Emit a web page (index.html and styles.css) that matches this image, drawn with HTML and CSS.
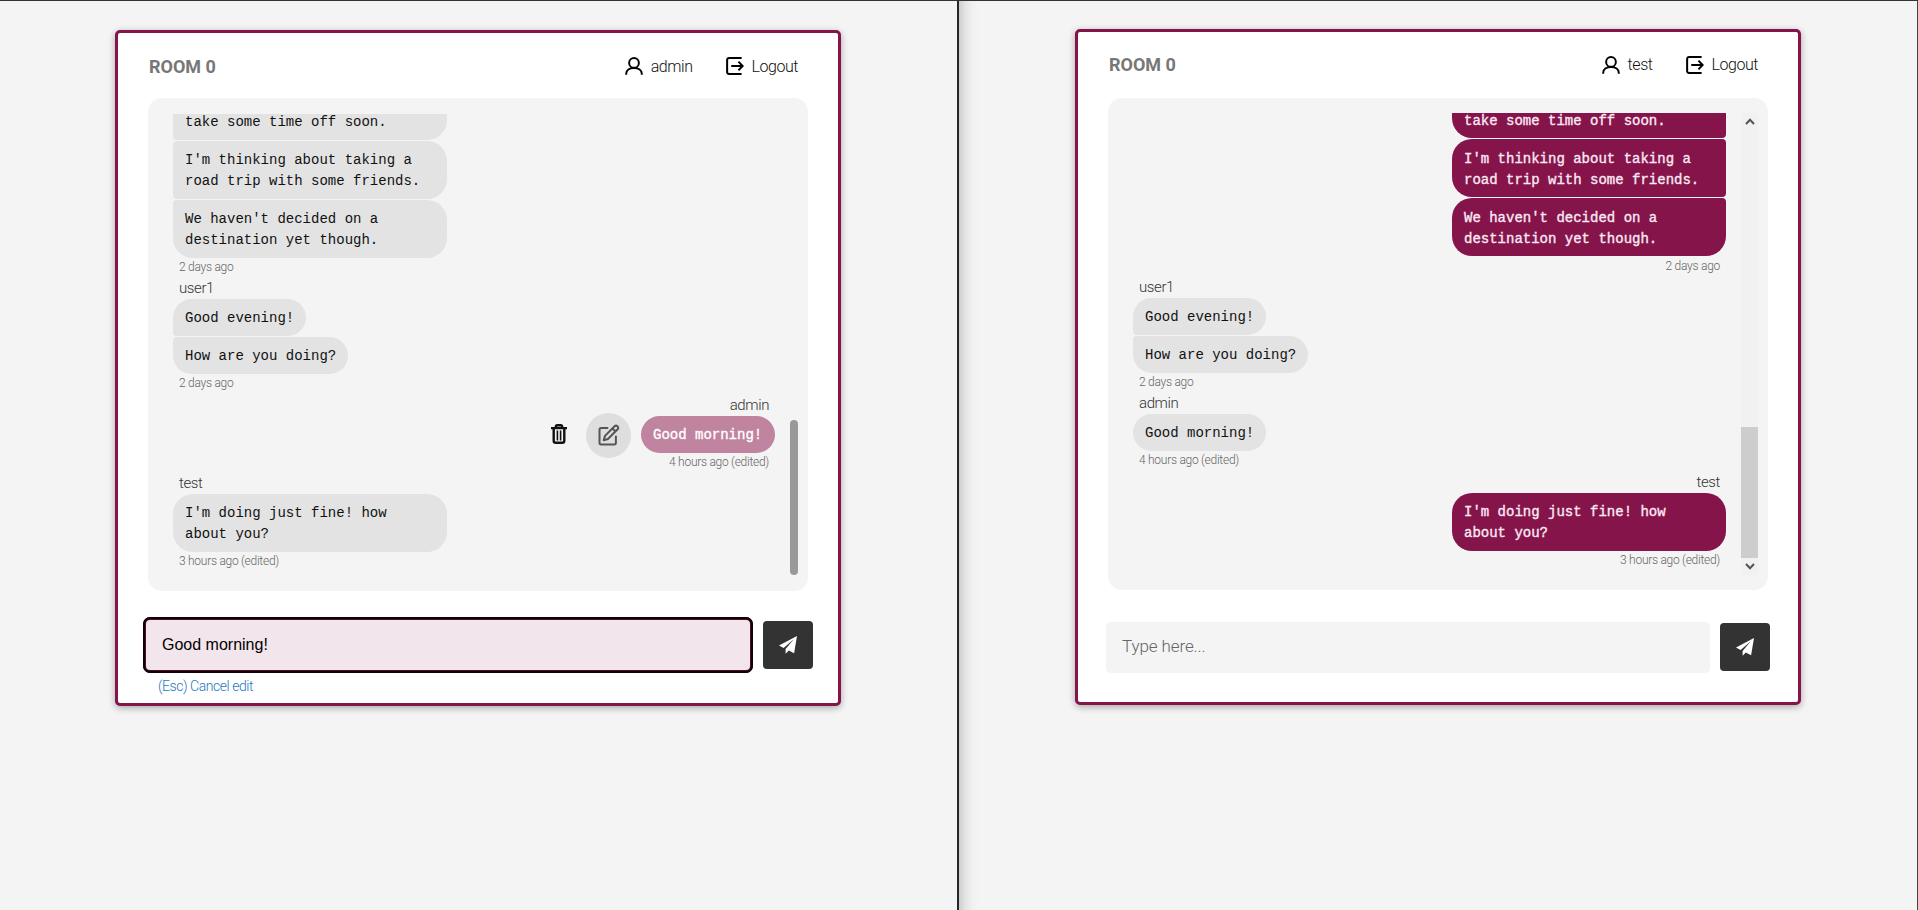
FILE: index.html
```html
<!DOCTYPE html>
<html lang="en">
<head>
<meta charset="utf-8">
<title>Room 0</title>
<link rel="stylesheet" href="styles.css">
</head>
<body>
<svg class="sprite" aria-hidden="true">
  <symbol id="i-user" viewBox="0 0 24 24"><path fill="none" stroke="currentColor" stroke-width="2.6" d="M1.6 23.5v-1.2C1.6 17.6 6 14.6 12 14.6s10.4 3 10.4 7.7v1.2M12 14.4a6.5 6.5 0 1 0 0-13 6.5 6.5 0 0 0 0 13z"/></symbol>
  <symbol id="i-logout" viewBox="0 0 24 24"><path fill="none" stroke="currentColor" stroke-width="2.7" d="M20.8 1.4H4.2A2.6 2.6 0 0 0 1.5 4v16a2.6 2.6 0 0 0 2.7 2.6h16.6M7 12h15M16.6 6.2 22.2 12l-5.6 5.8"/></symbol>
  <symbol id="i-trash" viewBox="0 0 16 20"><path fill="none" stroke="currentColor" stroke-width="2.4" d="M0 4.1h16M4.8 4V2.9Q4.8 1.2 6.3 1.2h3.4q1.5 0 1.5 1.7V4M2.7 4.5v12.2q0 2 2 2h6.600q2 0 2-2V4.5"/><path fill="none" stroke="currentColor" stroke-width="1.600" d="M6.4 6.500v10M9.600 6.500v10"/></symbol>
  <symbol id="i-edit" viewBox="0 0 22 22"><path fill="none" stroke="currentColor" stroke-width="2" stroke-linejoin="round" stroke-linecap="round" d="M9.5 4H3.2Q1.5 4 1.5 5.7v13q0 1.7 1.700 1.700h13q1.700 0 1.700-1.700V12.600M7 11.900 16.600 2.200q1.500-1.200 2.900.2 1.400 1.500.1 2.900L9.900 15l-4.200 1.200zM14.500 4.500l2.800 2.800"/></symbol>
  <symbol id="i-send" viewBox="0 0 18 18"><path fill="currentColor" d="M18 0 0 9.600l4.600 2.300L14.800 3.300 6.600 13v4.800l3.200-3.400 5.300 2.800z"/></symbol>
</svg>
<main class="screens">
  <section class="pane pane-left">
    <div class="card">
      <header class="head">
        <h1 class="title">ROOM 0</h1>
        <nav class="nav">
          <a class="link"><svg class="icon"><use href="#i-user"/></svg><span>admin</span></a>
          <a class="link"><svg class="icon"><use href="#i-logout"/></svg><span>Logout</span></a>
        </nav>
      </header>
      <div class="chat">
        <div class="messages">
          <div class="group">
            <p class="bubble cut tail-bottom">take some time off soon.</p>
            <p class="bubble tail-top tail-bottom">I'm thinking about taking a road trip with some friends.</p>
            <p class="bubble tail-top">We haven't decided on a destination yet though.</p>
            <span class="time">2 days ago</span>
          </div>
          <div class="group">
            <span class="name">user1</span>
            <p class="bubble tail-bottom">Good evening!</p>
            <p class="bubble tail-top">How are you doing?</p>
            <span class="time">2 days ago</span>
          </div>
          <div class="group mine">
            <span class="name">admin</span>
            <div class="row">
              <svg class="trash"><use href="#i-trash"/></svg>
              <button class="edit"><svg class="edit-icon"><use href="#i-edit"/></svg></button>
              <p class="bubble editing">Good morning!</p>
            </div>
            <span class="time">4 hours ago (edited)</span>
          </div>
          <div class="group">
            <span class="name">test</span>
            <p class="bubble">I'm doing just fine! how about you?</p>
            <span class="time">3 hours ago (edited)</span>
          </div>
        </div>
        <div class="bar-slim"><div class="thumb-slim"></div></div>
      </div>
      <div class="composer">
        <input class="field active" value="Good morning!">
        <button class="send"><svg class="send-icon"><use href="#i-send"/></svg></button>
      </div>
      <a class="cancel">(Esc) Cancel edit</a>
    </div>
  </section>
  <section class="pane pane-right">
    <div class="card">
      <header class="head">
        <h1 class="title">ROOM 0</h1>
        <nav class="nav">
          <a class="link"><svg class="icon"><use href="#i-user"/></svg><span>test</span></a>
          <a class="link"><svg class="icon"><use href="#i-logout"/></svg><span>Logout</span></a>
        </nav>
      </header>
      <div class="chat">
        <div class="messages">
          <div class="group mine stack">
            <p class="bubble cut tail-bottom">take some time off soon.</p>
            <p class="bubble tail-top tail-bottom">I'm thinking about taking a road trip with some friends.</p>
            <p class="bubble tail-top">We haven't decided on a destination yet though.</p>
            <span class="time">2 days ago</span>
          </div>
          <div class="group">
            <span class="name">user1</span>
            <p class="bubble tail-bottom">Good evening!</p>
            <p class="bubble tail-top">How are you doing?</p>
            <span class="time">2 days ago</span>
          </div>
          <div class="group">
            <span class="name">admin</span>
            <p class="bubble">Good morning!</p>
            <span class="time">4 hours ago (edited)</span>
          </div>
          <div class="group mine">
            <span class="name">test</span>
            <p class="bubble">I'm doing just fine! how about you?</p>
            <span class="time">3 hours ago (edited)</span>
          </div>
        </div>
        <div class="bar-wide">
          <svg class="arrow" viewBox="0 0 10 7"><path d="M1 6l4-4.300L9 6"/></svg>
          <div class="thumb-wide"></div>
          <svg class="arrow" viewBox="0 0 10 7"><path d="M1 1l4 4.300L9 1"/></svg>
        </div>
      </div>
      <div class="composer">
        <input class="field" placeholder="Type here...">
        <button class="send"><svg class="send-icon"><use href="#i-send"/></svg></button>
      </div>
    </div>
  </section>
</main>
</body>
</html>
```
FILE: styles.css
```css
* { box-sizing: border-box; }

body {
  margin: 0;
  background: #f4f4f4;
  font-family: Roboto, "Noto Sans", sans-serif;
  font-weight: 300;
}

h1, p { margin: 0; }

.sprite { display: none; }

.screens {
  display: flex;
  width: 1918px;
  height: 910px;
  overflow: hidden;
  border-top: 1px solid #333;
}

.pane {
  display: flex;
  justify-content: center;
  align-items: flex-start;
}

.pane-left {
  width: 959px;
  padding-top: 29px;
  border-right: 2px solid #24262a;
}

.pane-right {
  width: 959px;
  padding-top: 28px;
  border-right: 1px solid #444;
  background: linear-gradient(to right, #cdcdcd, #e3e3e3 6px, #f0f0f0 13px, #f4f4f4 20px);
}

.card {
  width: 726px;
  height: 676px;
  border: 3px solid #85144b;
  border-radius: 5px;
  background: #fff;
  box-shadow: 0 2px 7px rgba(0, 0, 0, 0.32);
}

.pane-left .card { margin-left: -1px; }

.head {
  display: flex;
  justify-content: space-between;
  align-items: center;
  height: 65px;
  padding: 1px 40px 0 31px;
}

.pane-right .head { height: 66px; padding-bottom: 2px; }

.title {
  color: #777;
  font-size: 18px;
  font-weight: 700;
}

.nav { display: flex; gap: 33px; }

.link {
  display: flex;
  align-items: center;
  gap: 8px;
  color: #111;
  font-size: 16px;
  letter-spacing: -0.45px;
}

.icon { width: 18px; height: 18px; color: #000; }

.chat {
  display: flex;
  justify-content: space-between;
  width: 660px;
  height: 493px;
  margin-left: 30px;
  padding: 16px 10px 15px 25px;
  border-radius: 14px;
  background: #f4f4f4;
}

.pane-right .chat { height: 492px; padding-top: 15px; }

.messages {
  display: flex;
  flex-direction: column;
  justify-content: flex-end;
  width: 602px;
  overflow: hidden;
  padding-bottom: 5.700px;
}

.pane-right .messages { width: 593px; padding-bottom: 6px; }

.group {
  display: flex;
  flex-direction: column;
  align-items: flex-start;
  flex: none;
}

.mine { align-items: flex-end; }

.name {
  height: 23px;
  padding: 0 6px;
  color: #333;
  font-size: 15px;
  line-height: 24px;
  letter-spacing: -0.4px;
}

.time {
  height: 18.300px;
  padding: 0 6px;
  color: #666;
  font-size: 12px;
  line-height: 18px;
  letter-spacing: -0.27px;
}

.bubble {
  max-width: 274px;
  padding: 9px 12px 7px;
  border-radius: 20px;
  background: #e3e3e3;
  color: #111;
  font-family: "Liberation Mono", monospace;
  font-size: 14px;
  font-weight: 400;
  line-height: 21px;
}

.bubble + .bubble { margin-top: 1px; }

.cut { width: 274px; padding-top: 30px; }

.tail-top { border-top-left-radius: 4px; }
.tail-bottom { border-bottom-left-radius: 4px; }

.mine .bubble {
  background: #85144b;
  color: #fbe9f3;
  -webkit-text-stroke: 0.35px currentColor;
}
.mine .tail-top { border-top-left-radius: 20px; border-top-right-radius: 4px; }
.mine .tail-bottom { border-bottom-left-radius: 20px; border-bottom-right-radius: 4px; }
.mine .editing { background: #c083a0; color: #fff; }

.stack .bubble { padding-top: 10px; padding-bottom: 6px; }
.stack .cut { padding-top: 31px; }
.stack .time { margin-top: 1px; }

.row {
  display: flex;
  align-items: center;
  height: 37px;
}

.trash { width: 16px; height: 20px; margin: 0 19px 0 0; color: #111; }

.edit {
  display: flex;
  align-items: center;
  justify-content: center;
  width: 45px;
  height: 45px;
  margin: 2px 10px 0 0;
  padding: 0;
  border: 0;
  border-radius: 50%;
  background: #dedede;
  color: #555;
}

.edit-icon { width: 22px; height: 22px; }

.editing { width: 134px; }

.bar-slim {
  display: flex;
  align-items: flex-end;
  width: 8px;
  padding-bottom: 1px;
}

.thumb-slim {
  width: 8px;
  height: 155px;
  border-radius: 4px;
  background: #999;
}

.bar-wide {
  display: flex;
  flex-direction: column;
  align-items: center;
  justify-content: space-between;
  width: 17px;
  padding: 5px 0;
  background: #f1f1f1;
}

.thumb-wide {
  width: 17px;
  height: 131px;
  margin: auto 0 5px;
  background: #cdcdcd;
}

.arrow {
  width: 10px;
  height: 7px;
  fill: none;
  stroke: #555;
  stroke-width: 2;
}

.composer {
  display: flex;
  align-items: center;
  justify-content: space-between;
  height: 56px;
  margin: 26px 25px 0;
}

.pane-right .composer { margin: 29px 28px 0; }

.field {
  width: 604px;
  height: 51px;
  padding: 0 16px;
  border: 0;
  border-radius: 5px;
  background: #f4f4f4;
  color: #000;
  font: 400 16px "Liberation Sans", Arial, sans-serif;
}

.field::placeholder {
  color: #666;
  font: 300 17px Roboto, sans-serif;
  letter-spacing: -0.1px;
}

.field.active {
  width: 610px;
  height: 56px;
  padding: 0 18px 1px 18px;
  border: 1px solid #85144b;
  outline: 2px solid #120008;
  outline-offset: -2px;
  box-shadow: inset 0 0 0 2px #4a1029;
  border-radius: 7px;
  background: #f3e5ec;
}

.send {
  display: flex;
  align-items: center;
  justify-content: center;
  width: 50px;
  height: 48px;
  padding: 0;
  border: 0;
  border-radius: 4px;
  background: #333;
  color: #fff;
}

.send-icon { width: 18px; height: 18px; }

.cancel {
  display: block;
  margin: 5px 0 0 40px;
  color: #1f78c1;
  font-size: 14px;
  line-height: 17px;
  letter-spacing: -0.45px;
}
```
